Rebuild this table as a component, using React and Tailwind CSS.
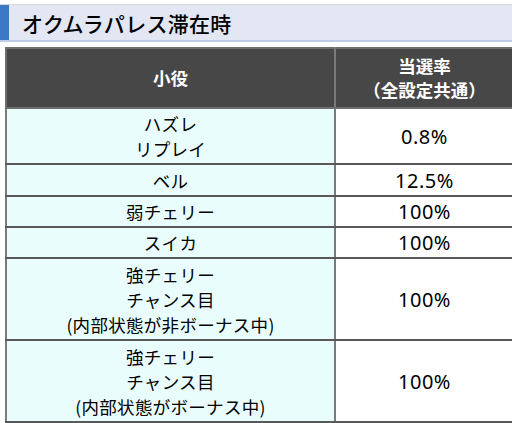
const rows = [
  { name: ['ハズレ', 'リプレイ'], rate: '0.8%', h: 'h-[56px]' },
  { name: ['ベル'], rate: '12.5%', h: 'h-[32px]' },
  { name: ['弱チェリー'], rate: '100%', h: 'h-[31px]' },
  { name: ['スイカ'], rate: '100%', h: 'h-[31px]' },
  { name: ['強チェリー', 'チャンス目', '(内部状態が非ボーナス中)'], rate: '100%', h: 'h-[82px]' },
  { name: ['強チェリー', 'チャンス目', '(内部状態がボーナス中)'], rate: '100%', h: 'h-[82px]' },
];

export default function App() {
  return (
    <div
      className="w-[512px] h-[423px] overflow-hidden bg-white text-black"
      style={{ fontFamily: '"Noto Sans CJK JP", "Noto Sans", sans-serif' }}
    >
      <div className="mt-[4px] flex h-[38px] border-t border-[#d3d6de] border-b-2 border-b-[#bfcbe4] bg-[#e3e6f3]">
        <div className="w-[9px] bg-[#3b78c4]" />
        <h1 className="pl-[13px] text-[21px] leading-[36px] font-medium tracking-[0.3px]">オクムラパレス滞在時</h1>
      </div>

      <table className="ml-[5px] mt-[5px] w-[520px] border-collapse text-[17.5px]">
        <thead>
          <tr className="h-[60px] bg-[#474747] text-white font-bold text-[17.5px]">
            <th className="w-[329px] border-2 border-[#6e6e6e] border-r-[#7a7a7a] leading-[24px]">小役</th>
            <th className="border-2 border-[#6e6e6e] leading-[24px] pr-[10px]">
              <div>当選率</div>
              <div>（全設定共通）</div>
            </th>
          </tr>
        </thead>
        <tbody>
          {rows.map((r, i) => (
            <tr key={i} className={r.h}>
              <td className="border-2 border-x-[#7a7a7a] border-y-[#585858] bg-[#e9fdfd] text-center leading-[25px] py-0 tracking-[0.3px]">
                {r.name.map((n, j) => (
                  <div key={j}>{n}</div>
                ))}
              </td>
              <td
                className="border-2 border-x-[#7a7a7a] border-y-[#585858] bg-white text-center text-[20px] leading-[25px] pr-[10px] tracking-[0.5px]"
                style={{ fontFamily: '"Noto Sans", sans-serif' }}
              >
                {r.rate}
              </td>
            </tr>
          ))}
        </tbody>
      </table>
    </div>
  );
}
